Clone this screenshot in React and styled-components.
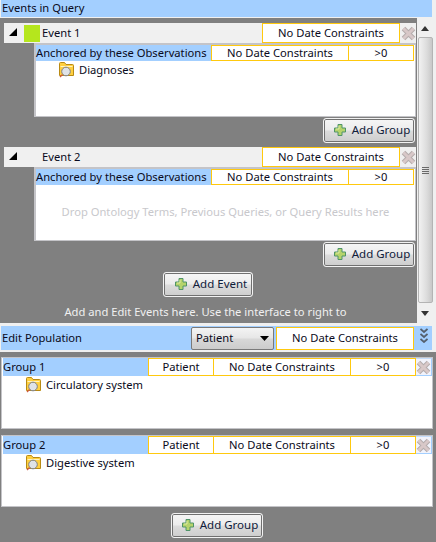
import React from "react";
import styled, { createGlobalStyle } from "styled-components";

const Global = createGlobalStyle`
  html, body { margin: 0; padding: 0; background: #808080; }
  #root { width: 436px; height: 542px; overflow: hidden; }
  * { box-sizing: border-box; }
`;

const Page = styled.div`
  width: 436px;
  height: 542px;
  display: flex;
  flex-direction: column;
  background: #808080;
  color: #0a0a20;
  font-family: "Noto Sans", "Open Sans", sans-serif;
  font-size: 11.2px;
  line-height: 16px;
  overflow: hidden;
`;

const TitleBar = styled.div`
  height: 18px;
  flex: none;
  padding-left: 1px;
  background: #a3cfff;
  border-left: 1px solid #f0f0f0;
  border-bottom: 1px solid #f0f0f0;
  border-right: 4px solid #f0f0f0;
`;

const TopPanel = styled.div`
  height: 305px;
  flex: none;
  display: flex;
`;

const EventsArea = styled.div`
  flex: 1;
  min-width: 0;
  padding: 5px 1px 0 4px;
  display: flex;
  flex-direction: column;
  align-items: stretch;
`;

const EventBlock = styled.div`
  height: 124px;
  flex: none;
  display: flex;
  flex-direction: column;
`;

const EventHeader = styled.div`
  height: 20px;
  flex: none;
  display: flex;
  align-items: center;
  background: #f0f0f0;
`;

const Toggle = styled.svg`
  width: 8px;
  height: 8px;
  margin: 0 7px 3px 5px;
  flex: none;
`;

const Swatch = styled.div`
  width: 16px;
  height: 17px;
  margin-right: 2px;
  flex: none;
  background: ${(p) => p.$color};
`;

const EventName = styled.div`
  flex: 1;
`;

const GoldCell = styled.div`
  flex: none;
  width: ${(p) => p.$width}px;
  height: ${(p) => p.$height}px;
  background: #fff;
  border: 1px solid #ffc90e;
  display: flex;
  align-items: center;
  justify-content: center;
`;

const EventBody = styled.div`
  flex: none;
  height: 74px;
  margin-left: 30px;
  background: #fff;
  border: 1px solid #c4c4c8;
  border-top-width: 2px;
  border-left-width: 2px;
  display: flex;
  flex-direction: column;
`;

const BodyHeader = styled.div`
  height: 16px;
  flex: none;
  display: flex;
  align-items: stretch;
`;

const BlueLabel = styled.div`
  width: ${(p) => p.$width}px;
  flex: none;
  background: #a3cfff;
  display: flex;
  align-items: center;
`;

const Cell = styled.div`
  flex: none;
  width: ${(p) => p.$width}px;
  margin-left: ${(p) => (p.$first ? 0 : -1)}px;
  background: #fff;
  border: 1px solid #ffc90e;
  display: flex;
  align-items: center;
  justify-content: center;
`;

const Term = styled.div`
  display: flex;
  align-items: center;
  gap: 5px;
  height: 18px;
  margin-left: ${(p) => p.$indent}px;
`;

const DropHint = styled.div`
  flex: 1;
  display: flex;
  align-items: center;
  justify-content: center;
  color: #c8c8cc;
  padding-bottom: 2px;
`;

const ButtonRow = styled.div`
  display: flex;
  justify-content: ${(p) => p.$justify || "center"};
  padding-right: ${(p) => p.$right || 0}px;
  margin-top: ${(p) => p.$top || 0}px;
`;

const Button = styled.div`
  width: ${(p) => p.$width}px;
  height: 25px;
  padding: 0 0 1px 6px;
  display: flex;
  align-items: center;
  justify-content: center;
  gap: 6px;
  flex: none;
  font-size: 11.5px;
  border: 1px solid #f2f2f2;
  border-radius: 3px;
  box-shadow: inset 0 0 0 1px #707070;
  background: linear-gradient(#f6f6f6, #ececec 48%, #dcdcdc 52%, #cdcdcd);
  color: #10203a;
`;

const Hint = styled.div`
  color: #f0f0f0;
  text-align: center;
  margin-top: 7px;
  padding-right: 9px;
  height: 16px;
`;

const ScrollBar = styled.div`
  width: 19px;
  flex: none;
  padding-right: 3px;
  background: #f0f0f0;
  display: flex;
  flex-direction: column;
  align-items: center;
`;

const ScrollArrow = styled.svg`
  width: 8px;
  height: 5px;
  margin: ${(p) => p.$margin};
  flex: none;
`;

const ScrollThumb = styled.div`
  flex: 1;
  width: 15px;
  background: linear-gradient(90deg, #f2f2f2, #dcdcdc 60%, #c8c8c8);
  border: 1px solid #b4b4b4;
  border-radius: 2px;
  display: flex;
  align-items: center;
  justify-content: center;
`;

const Grip = styled.div`
  width: 7px;
  height: 7px;
  background: repeating-linear-gradient(#6a6a6a 0 1px, transparent 1px 2px);
`;

const PopulationBar = styled.div`
  height: 29px;
  flex: none;
  display: flex;
  align-items: center;
  background: #a3cfff;
  border: 1px solid #f0f0f0;
  border-width: 3px 4px 2px 1px;
`;

const PopLabel = styled.div`
  width: 190px;
  flex: none;
  padding-left: 1px;
`;

const SelectBox = styled.div`
  width: 83px;
  height: 23px;
  flex: none;
  margin-right: 2px;
  padding: 0 4px;
  display: flex;
  align-items: center;
  justify-content: space-between;
  border: 1px solid #7a7a7a;
  border-radius: 2px;
  background: linear-gradient(#f4f4f4, #e6e6e6 48%, #d8d8d8 52%, #cccccc);
`;

const Collapse = styled.svg`
  width: 8px;
  height: 15px;
  margin: 0 0 5px 6px;
  flex: none;
`;

const Groups = styled.div`
  flex: 1;
  display: flex;
  flex-direction: column;
  gap: 6px;
  padding: 5px 3px 0 1px;
`;

const GroupCard = styled.div`
  height: 72px;
  flex: none;
  background: #fff;
  border: 1px solid #c4c4c8;
  display: flex;
  flex-direction: column;
`;

const GroupHeader = styled.div`
  height: 18px;
  flex: none;
  display: flex;
  align-items: stretch;
  margin-left: 1px;
  background: #a3cfff;
`;

const CloseSlot = styled.div`
  flex: 1;
  display: flex;
  align-items: center;
  justify-content: center;
  background: #f2f3fb;
  border-top: 1px solid #c4dcfa;
  border-bottom: 1px solid #a3cfff;
  border-right: 1px solid #a3cfff;
`;

const CloseIcon = styled.svg`
  width: 15px;
  height: 15px;
  flex: none;
  margin: ${(p) => p.$margin || "0"};
`;

const FolderIconBox = styled.svg`
  width: 15px;
  height: 16px;
  flex: none;
`;

const PlusIconBox = styled.svg`
  width: 12px;
  height: 12px;
  flex: none;
`;

const Plus = () => (
  <PlusIconBox viewBox="0 0 12 12">
    <path d="M4 .5h4v3.500h3.500v4H8v3.500H4V8H.5V4H4z" fill="#b5d36b" stroke="#4f9468" />
    <path d="M5 2v3H2" fill="none" stroke="#dfeaa0" />
  </PlusIconBox>
);

const Cross = ({ margin }) => (
  <CloseIcon viewBox="0 0 15 15" $margin={margin}>
    <path d="M2.500 2.500 12.500 12.500M12.500 2.500 2.500 12.500" stroke="#b4acac" strokeWidth="5" />
    <path d="M2.500 2.500 12.500 12.500M12.500 2.500 2.500 12.500" stroke="#d8c8c8" strokeWidth="3" />
  </CloseIcon>
);

const Folder = () => (
  <FolderIconBox viewBox="0 0 15 16">
    <path d="M.5 13.500V1.500q0-1 1-1h4l1.500 2h6.500q1 0 1 1v10z" fill="#ffd040" stroke="#b88a14" />
    <path d="M1.500 4.500h12" stroke="#fff3c0" />
    <circle cx="7" cy="9.500" r="4.300" fill="#dfe3e8" stroke="#7f7f80" />
    <path d="M3.500 12.500 1 15" stroke="#d05a40" strokeWidth="1.300" />
  </FolderIconBox>
);

const Triangle = () => (
  <Toggle viewBox="0 0 8 8">
    <path d="M0 8 8 0v8z" fill="#000" />
  </Toggle>
);

const Event = ({ name, color, children }) => (
  <EventBlock>
    <EventHeader>
      <Triangle />
      <Swatch $color={color || "transparent"} />
      <EventName>{name}</EventName>
      <GoldCell $width={138} $height={20}>No Date Constraints</GoldCell>
      <Cross margin="0 0 0 1px" />
    </EventHeader>
    <EventBody>
      <BodyHeader>
        <BlueLabel $width={175}>Anchored by these Observations</BlueLabel>
        <Cell $width={138} $first>No Date Constraints</Cell>
        <Cell $width={66}>&gt;0</Cell>
      </BodyHeader>
      {children}
    </EventBody>
    <ButtonRow $justify="flex-end" $right={1} $top={1}>
      <Button $width={92}><Plus />Add Group</Button>
    </ButtonRow>
  </EventBlock>
);

const Group = ({ name, term }) => (
  <GroupCard>
    <GroupHeader>
      <BlueLabel $width={145}>{name}</BlueLabel>
      <Cell $width={66} $first>Patient</Cell>
      <Cell $width={138}>No Date Constraints</Cell>
      <Cell $width={66}>&gt;0</Cell>
      <CloseSlot><Cross /></CloseSlot>
    </GroupHeader>
    <Term $indent={24}><Folder />{term}</Term>
  </GroupCard>
);

export default function App() {
  return (
    <Page>
      <Global />
      <TitleBar>Events in Query</TitleBar>
      <TopPanel>
        <EventsArea>
          <Event name="Event 1" color="#b5e61d">
            <Term $indent={23}><Folder />Diagnoses</Term>
          </Event>
          <Event name="Event 2">
            <DropHint>Drop Ontology Terms, Previous Queries, or Query Results here</DropHint>
          </Event>
          <ButtonRow $top={1} $right={4}>
            <Button $width={90}><Plus />Add Event</Button>
          </ButtonRow>
          <Hint>Add and Edit Events here. Use the interface to right to</Hint>
        </EventsArea>
        <ScrollBar>
          <ScrollArrow viewBox="0 0 8 5" $margin="8px 0 6px">
            <path d="M0 5 4 0l4 5z" fill="#333" />
          </ScrollArrow>
          <ScrollThumb><Grip /></ScrollThumb>
          <ScrollArrow viewBox="0 0 8 5" $margin="8px 0 7px">
            <path d="M0 0h8L4 5z" fill="#333" />
          </ScrollArrow>
        </ScrollBar>
      </TopPanel>
      <PopulationBar>
        <PopLabel>Edit Population</PopLabel>
        <SelectBox>
          Patient
          <svg width="9" height="5" viewBox="0 0 9 5"><path d="M0 0h9L4.500 5z" fill="#000" /></svg>
        </SelectBox>
        <GoldCell $width={138} $height={23}>No Date Constraints</GoldCell>
        <Collapse viewBox="0 0 8 15">
          <path d="M.5 1l3.500 3 3.500-3M.5 6l3.500 3 3.500-3M.5 11l3.500 3 3.500-3" fill="none" stroke="#55606e" strokeWidth="1.800" />
        </Collapse>
      </PopulationBar>
      <Groups>
        <Group name="Group 1" term="Circulatory system" />
        <Group name="Group 2" term="Digestive system" />
        <ButtonRow>
          <Button $width={92}><Plus />Add Group</Button>
        </ButtonRow>
      </Groups>
    </Page>
  );
}
